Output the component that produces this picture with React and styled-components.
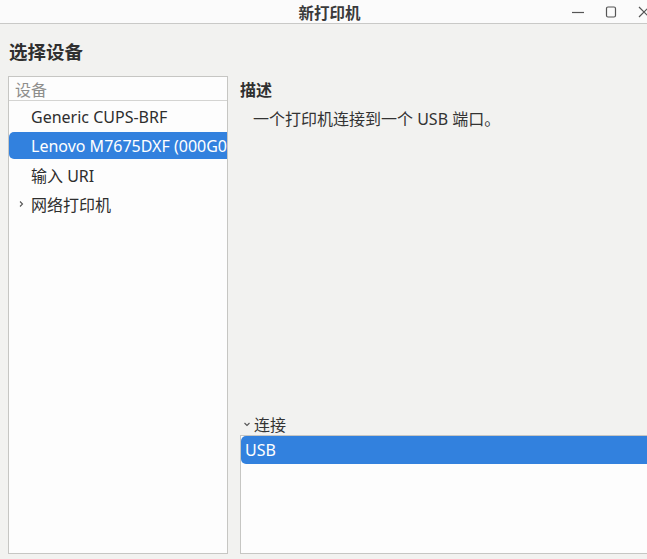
import React from 'react'
import styled, { createGlobalStyle } from 'styled-components'

const Global = createGlobalStyle`
  html, body { margin: 0; padding: 0; }
  body {
    width: 647px;
    height: 559px;
    overflow: hidden;
    background: #f2f2f0;
    font-family: "Noto Sans", "Noto Sans CJK SC", sans-serif;
    color: #2e2e2e;
  }
`

const Window = styled.div`
  width: 647px;
  height: 559px;
  display: flex;
  flex-direction: column;
  overflow: hidden;
`

const TitleBar = styled.div`
  height: 23px;
  flex: none;
  background: #fbfbfb;
  border-bottom: 1px solid #c9c9c7;
  display: flex;
  align-items: center;
  justify-content: center;
  position: relative;
`

const Title = styled.div`
  font-family: "Noto Sans CJK SC", sans-serif;
  font-size: 15.5px;
  font-weight: 700;
  color: #3a3a3a;
  margin-left: 12px;
`

const Controls = styled.div`
  position: absolute;
  top: 0;
  right: -4px;
  height: 23px;
  display: flex;
  align-items: center;
  gap: 19px;
  color: #444;
`

const Body = styled.div`
  flex: 1;
  display: flex;
  flex-direction: column;
  padding: 0 0 5px 8px;
  min-height: 0;
`

const Heading = styled.div`
  font-family: "Noto Sans CJK SC", sans-serif;
  font-size: 18.5px;
  font-weight: 700;
  color: #2f2f2f;
  height: 52px;
  display: flex;
  align-items: center;
  padding-left: 1px;
  padding-top: 1px;
  box-sizing: border-box;
`

const Columns = styled.div`
  flex: 1;
  display: flex;
  gap: 12px;
  min-height: 0;
`

const DeviceList = styled.div`
  width: 220px;
  flex: none;
  background: #fdfdfd;
  border: 1px solid #c6c6c3;
  box-sizing: border-box;
  display: flex;
  flex-direction: column;
  overflow: hidden;
`

const ListHeader = styled.div`
  height: 24px;
  flex: none;
  border-bottom: 1px solid #d4d4d2;
  font-family: "Noto Sans CJK SC", sans-serif;
  font-size: 16px;
  color: #8e8e8c;
  display: flex;
  align-items: center;
  padding-left: 6px;
  box-sizing: border-box;
`

const Row = styled.div`
  height: 27px;
  margin-top: 2px;
  display: flex;
  align-items: center;
  padding-left: ${p => (p.$indent ? 2 : 22)}px;
  font-size: 16px;
  white-space: nowrap;
  overflow: hidden;
  border-radius: 5px 0 0 5px;
  background: ${p => (p.$selected ? '#3281de' : 'transparent')};
  color: ${p => (p.$selected ? '#ffffff' : '#2e2e2e')};
`

const Arrow = styled.span`
  width: 20px;
  display: inline-flex;
  justify-content: center;
  align-items: center;
`

const Detail = styled.div`
  flex: 1;
  display: flex;
  flex-direction: column;
  min-width: 0;
  margin-right: -10px;
`

const Label = styled.div`
  font-family: "Noto Sans CJK SC", sans-serif;
  font-size: 16px;
  font-weight: 700;
  color: #2f2f2f;
  margin-top: 1px;
  height: 24px;
  display: flex;
  align-items: center;
`

const Description = styled.div`
  font-size: 16px;
  color: #333;
  padding-left: 13px;
  margin-top: 5px;
  height: 24px;
  display: flex;
  align-items: center;
`

const Spacer = styled.div`
  flex: 1;
`

const Expander = styled.div`
  display: flex;
  align-items: center;
  font-family: "Noto Sans CJK SC", sans-serif;
  font-size: 16px;
  color: #333;
  height: 22px;
  padding-left: 3px;
  gap: 3px;
`

const ConnList = styled.div`
  height: 119px;
  flex: none;
  background: #fdfdfd;
  border: 1px solid #c6c6c3;
  box-sizing: border-box;
`

const ConnRow = styled.div`
  height: 28px;
  background: #3281de;
  color: #fff;
  font-size: 16px;
  display: flex;
  align-items: center;
  padding-left: 4px;
  border-radius: 5px 0 0 5px;
`

export default function App() {
  return (
    <Window>
      <Global />
      <TitleBar>
        <Title>新打印机</Title>
        <Controls>
          <svg width="14" height="14" viewBox="0 0 14 14">
            <path d="M1 7.5h12" stroke="#555" strokeWidth="1.2" />
          </svg>
          <svg width="14" height="14" viewBox="0 0 14 14">
            <rect x="2.5" y="2" width="9" height="10" rx="1.5" fill="none" stroke="#555" strokeWidth="1.2" />
          </svg>
          <svg width="14" height="14" viewBox="0 0 14 14">
            <path d="M2 2l10 10M12 2L2 12" stroke="#555" strokeWidth="1.2" />
          </svg>
        </Controls>
      </TitleBar>
      <Body>
        <Heading>选择设备</Heading>
        <Columns>
          <DeviceList>
            <ListHeader>设备</ListHeader>
            <Row>Generic CUPS-BRF</Row>
            <Row $selected>Lenovo M7675DXF (000G01)</Row>
            <Row>输入 URI</Row>
            <Row $indent>
              <Arrow>
                <svg width="8" height="8" viewBox="0 0 8 8">
                  <path d="M3 1.5l2.5 2.5L3 6.5" fill="none" stroke="#555" strokeWidth="1.1" />
                </svg>
              </Arrow>
              网络打印机
            </Row>
          </DeviceList>
          <Detail>
            <Label>描述</Label>
            <Description>一个打印机连接到一个 USB 端口。</Description>
            <Spacer />
            <Expander>
              <svg width="8" height="8" viewBox="0 0 8 8">
                <path d="M1.5 3l2.5 2.5L6.5 3" fill="none" stroke="#555" strokeWidth="1.1" />
              </svg>
              连接
            </Expander>
            <ConnList>
              <ConnRow>USB</ConnRow>
            </ConnList>
          </Detail>
        </Columns>
      </Body>
    </Window>
  )
}
